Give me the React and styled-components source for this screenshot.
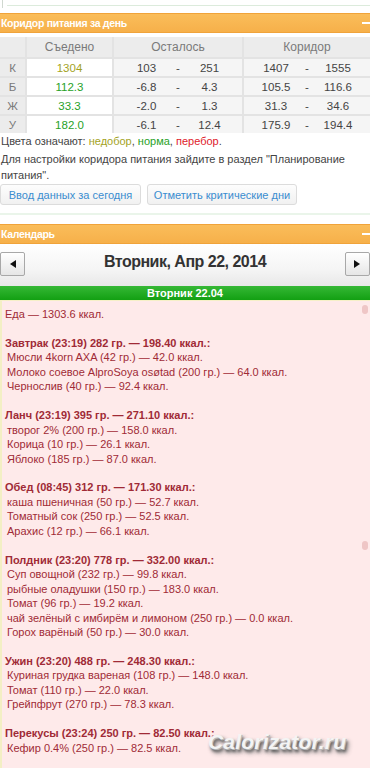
import React from "react";
import styled, { createGlobalStyle } from "styled-components";

const Global = createGlobalStyle`
  html, body { margin: 0; padding: 0; background: #fff; }
  body { font-family: "Liberation Sans", Arial, sans-serif; width: 370px; overflow-x: hidden; }
  * { box-sizing: border-box; }
`;

const Page = styled.div`
  width: 370px;
  min-height: 768px;
  display: flex;
  flex-direction: column;
`;

const TopStrip = styled.div`
  height: 13px;
  display: flex;
  align-items: flex-start;
`;

const TopMark = styled.span`
  width: 1px;
  height: 8px;
  margin-left: 2px;
  background: #d0d8d0;
`;

const TopLine = styled.span`
  flex: 1;
  height: 6px;
  margin-left: 4px;
  border-bottom: 1px solid #dcebdc;
`;

const PanelHeader = styled.div`
  height: 20px;
  display: flex;
  align-items: center;
  justify-content: space-between;
  padding-left: 1px;
  border-top: 1px solid #f0a33a;
  border-bottom: 1px solid #f0a33a;
  background: linear-gradient(#fabd5a, #f6b04a);
  color: #fff;
  font-size: 10.5px;
  letter-spacing: -0.3px;
  font-weight: bold;
  margin-top: ${(p) => p.$mt || 0}px;
`;

const Minus = styled.span`
  width: 8px;
  height: 2px;
  background: #fff;
`;

const Table = styled.div`
  margin-top: 4px;
  display: grid;
  grid-template-columns: 25px 85px 128px 1fr;
  grid-auto-rows: 17px;
  grid-template-rows: 20px;
  gap: 2px;
  background: #e3e3e3;
`;

const HeadCell = styled.div`
  background: #ececec;
  color: #7a7a7a;
  font-size: 12px;
  display: flex;
  align-items: center;
  justify-content: center;
`;

const LabelCell = styled(HeadCell)`
  font-size: 11.5px;
`;

const EatenCell = styled.div`
  background: #fff;
  color: ${(p) => p.$color};
  font-size: 11.5px;
  display: flex;
  align-items: center;
  justify-content: center;
`;

const RangeCell = styled.div`
  background: #f5f5f5;
  color: #444;
  font-size: 11.5px;
  display: grid;
  grid-template-columns: 1fr 10px 1fr;
  align-items: center;
  justify-items: center;
  padding: 0 6px;
`;

const Notes = styled.div`
  color: #444;
  font-size: 11px;
  padding-left: 1px;
`;

const NoteLine = styled.p`
  margin: 0 0 3px;
  line-height: 16px;
`;

const NoteText = styled.p`
  margin: 0;
  line-height: 15.5px;
`;

const Tone = styled.span`
  color: ${(p) => p.$color};
`;

const ButtonRow = styled.div`
  display: flex;
  gap: 6px;
  margin-top: 1px;
`;

const Button = styled.button`
  height: 21px;
  width: ${(p) => p.$w}px;
  padding: 0;
  border: 1px solid #dcdcdc;
  border-radius: 3px;
  background: linear-gradient(#fdfdfd, #f1f1f1);
  color: #3a8dd0;
  font-family: "Liberation Sans", Arial, sans-serif;
  font-size: 11px;
  cursor: pointer;
`;

const Divider = styled.div`
  margin-top: 8px;
  height: 2px;
  background: #eaf5ea;
`;

const CalNav = styled.div`
  height: 42px;
  display: flex;
  align-items: center;
  justify-content: space-between;
  background: linear-gradient(#ffffff, #f5f5f5 60%, #e8e8e8);
`;

const NavButton = styled.button`
  width: 25px;
  height: 24px;
  padding: 0;
  border: 1px solid #a8a8a8;
  border-radius: 2px;
  background: linear-gradient(#ffffff, #e6e6e6);
  display: flex;
  align-items: center;
  justify-content: center;
  margin-top: -2px;
`;

const CalTitle = styled.div`
  font-size: 16px;
  letter-spacing: -0.5px;
  font-weight: bold;
  color: #333;
  margin-top: -6px;
`;

const DayBar = styled.div`
  height: 14px;
  background: linear-gradient(#36b836, #13a013);
  color: #fff;
  font-size: 11px;
  font-weight: bold;
  display: flex;
  align-items: center;
  justify-content: center;
`;

const DayPanel = styled.div`
  position: relative;
  flex: 1;
  background: #feeaea;
  border-top: 1px solid #f6f0c8;
  border-left: 2px solid #f3efc4;
  padding: 6px 0 0 3px;
  color: #a02a36;
  font-size: 11px;
  line-height: 14.46px;
`;

const Line = styled.div`
  white-space: pre;
  font-weight: ${(p) => (p.$bold ? "bold" : "normal")};
  padding-left: ${(p) => (p.$item ? 2 : 0)}px;
  min-height: 14.46px;
`;

const Dot = styled.span`
  position: absolute;
  right: 2px;
  top: ${(p) => p.$top}px;
  width: 6px;
  height: 9px;
  border-radius: 3px;
  background: #efc6c6;
`;

const Watermark = styled.div`
  position: absolute;
  left: 206px;
  top: 434px;
  font-family: "Liberation Sans", Arial, sans-serif;
  font-size: 21px;
  font-weight: bold;
  font-style: italic;
  color: #f4f4f4;
  letter-spacing: 0.2px;
  text-shadow: 1px 1px 0 #b8b8b8, 2px 3px 3px #555, 3px 4px 5px #888;
`;

const Arrow = ({ dir }) => (
  <svg width="8" height="8" viewBox="0 0 8 8">
    {dir === "left" ? <polygon points="7,0 7,8 1,4" fill="#111" /> : <polygon points="1,0 1,8 7,4" fill="#111" />}
  </svg>
);

const rows = [
  { l: "К", v: "1304", c: "#a3a31e", r: ["103", "251"], k: ["1407", "1555"] },
  { l: "Б", v: "112.3", c: "#27a127", r: ["-6.8", "4.3"], k: ["105.5", "116.6"] },
  { l: "Ж", v: "33.3", c: "#27a127", r: ["-2.0", "1.3"], k: ["31.3", "34.6"] },
  { l: "У", v: "182.0", c: "#27a127", r: ["-6.1", "12.4"], k: ["175.9", "194.4"] },
];

const meals = [
  {
    t: "Завтрак (23:19) 282 гр. — 198.40 ккал.:",
    items: [
      "Мюсли 4korn AXA (42 гр.) — 42.0 ккал.",
      "Молоко соевое AlproSoya osøtad (200 гр.) — 64.0 ккал.",
      "Чернослив (40 гр.) — 92.4 ккал.",
    ],
  },
  {
    t: "Ланч (23:19) 395 гр. — 271.10 ккал.:",
    items: ["творог 2% (200 гр.) — 158.0 ккал.", "Корица (10 гр.) — 26.1 ккал.", "Яблоко (185 гр.) — 87.0 ккал."],
  },
  {
    t: "Обед (08:45) 312 гр. — 171.30 ккал.:",
    items: ["каша пшеничная (50 гр.) — 52.7 ккал.", "Томатный сок (250 гр.) — 52.5 ккал.", "Арахис (12 гр.) — 66.1 ккал."],
  },
  {
    t: "Полдник (23:20) 778 гр. — 332.00 ккал.:",
    items: [
      "Суп овощной (232 гр.) — 99.8 ккал.",
      "рыбные оладушки (150 гр.) — 183.0 ккал.",
      "Томат (96 гр.) — 19.2 ккал.",
      "чай зелёный с имбирём и лимоном (250 гр.) — 0.0 ккал.",
      "Горох варёный (50 гр.) — 30.0 ккал.",
    ],
  },
  {
    t: "Ужин (23:20) 488 гр. — 248.30 ккал.:",
    items: ["Куриная грудка вареная (108 гр.) — 148.0 ккал.", "Томат (110 гр.) — 22.0 ккал.", "Грейпфрут (270 гр.) — 78.3 ккал."],
  },
  {
    t: "Перекусы (23:24) 250 гр. — 82.50 ккал.:",
    items: ["Кефир 0.4% (250 гр.) — 82.5 ккал."],
  },
];

export default function App() {
  return (
    <Page>
      <Global />
      <TopStrip>
        <TopMark />
        <TopLine />
      </TopStrip>
      <PanelHeader>
        <span>Коридор питания за день</span>
        <Minus />
      </PanelHeader>
      <Table>
        <HeadCell />
        <HeadCell>Съедено</HeadCell>
        <HeadCell>Осталось</HeadCell>
        <HeadCell>Коридор</HeadCell>
        {rows.map((r) => (
          <React.Fragment key={r.l}>
            <LabelCell>{r.l}</LabelCell>
            <EatenCell $color={r.c}>{r.v}</EatenCell>
            <RangeCell>
              <span>{r.r[0]}</span>
              <span>-</span>
              <span>{r.r[1]}</span>
            </RangeCell>
            <RangeCell>
              <span>{r.k[0]}</span>
              <span>-</span>
              <span>{r.k[1]}</span>
            </RangeCell>
          </React.Fragment>
        ))}
      </Table>
      <Notes>
        <NoteLine>
          Цвета означают: <Tone $color="#a3a31e">недобор</Tone>, <Tone $color="#27a127">норма</Tone>,{" "}
          <Tone $color="#e0202a">перебор</Tone>.
        </NoteLine>
        <NoteText>Для настройки коридора питания зайдите в раздел "Планирование питания".</NoteText>
      </Notes>
      <ButtonRow>
        <Button $w={141}>Ввод данных за сегодня</Button>
        <Button $w={150}>Отметить критические дни</Button>
      </ButtonRow>
      <Divider />
      <PanelHeader $mt={9}>
        <span>Календарь</span>
        <Minus />
      </PanelHeader>
      <CalNav>
        <NavButton aria-label="prev">
          <Arrow dir="left" />
        </NavButton>
        <CalTitle>Вторник, Апр 22, 2014</CalTitle>
        <NavButton aria-label="next">
          <Arrow dir="right" />
        </NavButton>
      </CalNav>
      <DayBar>Вторник 22.04</DayBar>
      <DayPanel>
        <Line>Еда — 1303.6 ккал.</Line>
        <Line />
        {meals.map((m) => (
          <React.Fragment key={m.t}>
            <Line $bold>{m.t}</Line>
            {m.items.map((it) => (
              <Line $item key={it}>
                {it}
              </Line>
            ))}
            <Line />
          </React.Fragment>
        ))}
        <Dot $top={4} />
        <Dot $top={240} />
        <Watermark>Calorizator.ru</Watermark>
      </DayPanel>
    </Page>
  );
}
